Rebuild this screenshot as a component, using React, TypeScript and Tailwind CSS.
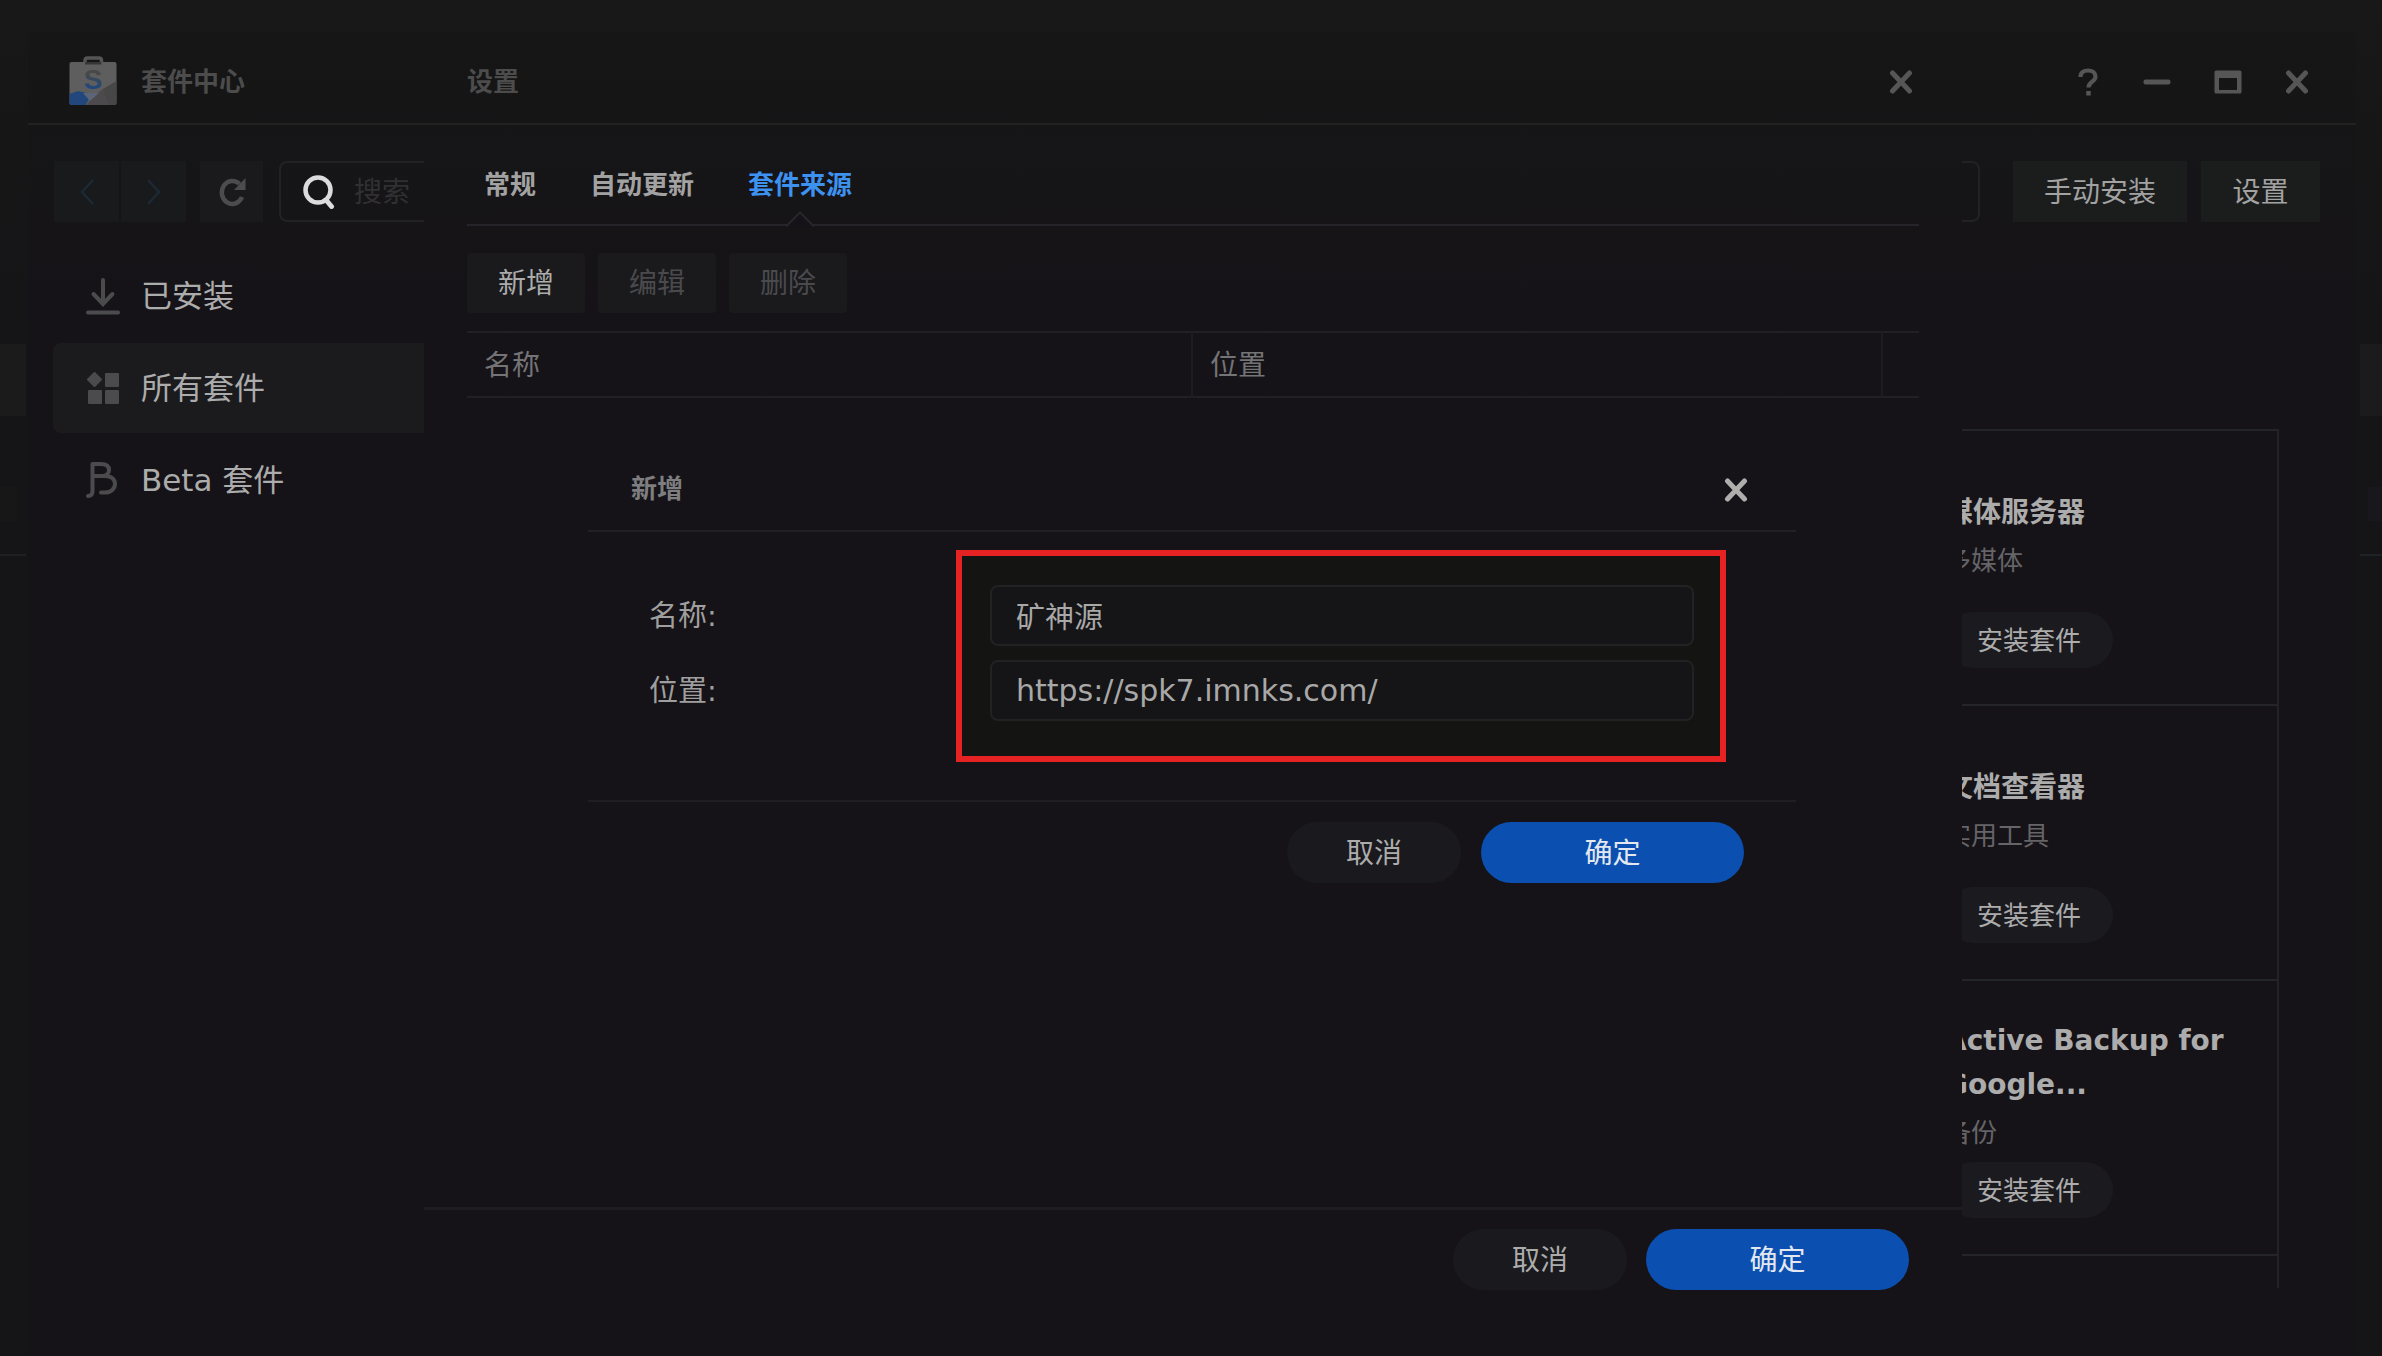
import React from "react";

function BagLogo() {
  return (
    <svg viewBox="0 0 48 52" className="h-[52px] w-12 shrink-0" aria-hidden="true">
      <defs>
        <linearGradient id="letter" x1="0" y1="0" x2="0" y2="1">
          <stop offset="0.3" stopColor="#484848" />
          <stop offset="0.8" stopColor="#1c4880" />
        </linearGradient>
      </defs>
      <path d="M16 8V4.500Q16 2 18.500 2H30Q32.500 2 32.500 4.500V8" fill="none" stroke="#555555" strokeWidth="3.500" />
      <rect x="0.500" y="6" width="47" height="43" rx="2" fill="#5e5e5e" />
      <path d="M16 6h16.500v2.500H16z" fill="#363636" />
      <path d="M27 49 34 33 47.500 25v22q0 2-2 2z" fill="#474747" />
      <path d="M22 42 34 33 40 49H18z" fill="#4c4a4c" />
      <path d="M0.500 38 9 35l13 3-5 11H2.500q-2 0-2-2z" fill="#21477c" />
      <path d="M14 37l16 0-9 8z" fill="#5c6478" />
      <text x="24" y="33" textAnchor="middle" fontFamily="Liberation Sans, sans-serif" fontWeight="700" fontSize="28" fill="url(#letter)">
        S
      </text>
    </svg>
  );
}

function CloseIcon() {
  return (
    <svg viewBox="0 0 24 24" className="size-6" fill="none" stroke="currentColor" strokeWidth="5" strokeLinecap="round" aria-hidden="true">
      <path d="M3.500 3 20.500 21M20.500 3 3.500 21" />
    </svg>
  );
}

function HelpIcon() {
  return (
    <svg viewBox="0 0 20 28" className="h-7 w-6" fill="none" stroke="currentColor" strokeWidth="4.200" aria-hidden="true">
      <path d="M2.500 9C2.500 4.500 5.500 2.500 10 2.500s7.500 2.500 7.500 6.200c0 5-7 5-7 10.800" />
      <path d="M10.500 23v4.500" strokeWidth="4.500" />
    </svg>
  );
}

function MinimizeIcon() {
  return (
    <svg viewBox="0 0 28 28" className="size-7" aria-hidden="true">
      <rect x="0.500" y="11.500" width="27" height="5" rx="2" fill="currentColor" />
    </svg>
  );
}

function MaximizeIcon() {
  return (
    <svg viewBox="0 0 28 28" className="size-7" aria-hidden="true">
      <path fillRule="evenodd" fill="currentColor" d="M2 2.500h24q1.500 0 1.500 1.500v20q0 1.500-1.500 1.500H2Q.5 25.500.5 24V4Q.5 2.500 2 2.500zM5 10v12h18V10z" />
    </svg>
  );
}

function RefreshIcon() {
  return (
    <svg viewBox="0 0 28 30" className="h-[30px] w-7" aria-hidden="true">
      <path d="M21.500 7A10.500 11.500 0 1 0 24 20" fill="none" stroke="currentColor" strokeWidth="4.500" />
      <path d="M27.500 1v12H16z" fill="currentColor" />
    </svg>
  );
}

function SearchIcon() {
  return (
    <svg viewBox="0 0 32 34" className="h-[34px] w-8 shrink-0 text-[#dcdcde]" fill="none" stroke="currentColor" aria-hidden="true">
      <circle cx="15" cy="15" r="12.500" strokeWidth="4.500" />
      <path d="m23.500 25.500 5 6" strokeWidth="5" strokeLinecap="round" />
    </svg>
  );
}

function InstalledIcon() {
  return (
    <svg viewBox="0 0 34 38" className="h-[38px] w-[34px]" fill="none" stroke="currentColor" strokeWidth="4" strokeLinecap="round" aria-hidden="true">
      <path d="M17 3v24M7.500 17 17 27l9.500-10M2 35.500h30" />
    </svg>
  );
}

function AllIcon() {
  return (
    <svg viewBox="0 0 34 34" className="size-[34px]" fill="currentColor" stroke="currentColor" strokeLinejoin="round" aria-hidden="true">
      <path d="m8.500 2 6.500 6.500-6.500 6.500L2 8.500z" strokeWidth="2" />
      <rect x="20" y="3" width="12" height="12" strokeWidth="2" />
      <rect x="3" y="20" width="12" height="12" strokeWidth="2" />
      <rect x="20" y="20" width="12" height="12" strokeWidth="2" />
    </svg>
  );
}

function BetaIcon() {
  return (
    <svg viewBox="0 0 34 36" className="h-9 w-[34px]" fill="none" stroke="currentColor" strokeWidth="4" strokeLinecap="round" strokeLinejoin="round" aria-hidden="true">
      <path d="M2 34c3 0 4.500-1.500 4.500-5V2H15c5 0 8 2 8 6s-3 6-7 6H7" />
      <path d="M16 14h3c6.500 0 10 3.500 10 8s-4 8.500-9.500 8.500H15" />
    </svg>
  );
}

const cards = [
  { title: "媒体服务器", kind: "多媒体" },
  { title: "文档查看器", kind: "实用工具" },
  { title: "Active Backup for Google...", kind: "备份" },
];

const navigation = [
  { label: "已安装", icon: <InstalledIcon />, active: false },
  { label: "所有套件", icon: <AllIcon />, active: true },
  { label: "Beta 套件", icon: <BetaIcon />, active: false },
];

function DialogButtons() {
  return (
    <>
      <button type="button" className="h-[61px] w-[174px] rounded-full bg-[#1a1a1e] pt-0.5 text-[28px]">
        取消
      </button>
      <button type="button" className="h-[61px] w-[263px] rounded-full bg-[#0b50b0] pt-0.5 text-[28px] text-[#e3e8f0]">
        确定
      </button>
    </>
  );
}

function AddSourceDialog() {
  return (
    <section role="dialog" aria-label="新增" className="absolute right-[166px] left-[164px] top-[415px] bg-[#151317]">
      <header className="flex h-[85px] items-center justify-between border-b-2 border-[#212024] pt-0.5 pr-[48px] pl-[43px]">
        <h2 className="text-[26px] font-bold text-[#7e7e80]">新增</h2>
        <button type="button" aria-label="关闭" className="text-[#aeaeac]">
          <CloseIcon />
        </button>
      </header>
      <form className="flex justify-between border-b-2 border-[#1f1e23] pt-[18px] pr-[70px] pb-[38px] pl-[61px]">
        <div className="flex flex-col gap-[14px] pt-9 text-[29px] text-[#a09f9f]">
          <label htmlFor="source-name" className="flex h-[61px] items-center">名称:</label>
          <label htmlFor="source-url" className="flex h-[61px] items-center">位置:</label>
        </div>
        <div className="flex w-[770px] flex-col gap-[14px] border-6 border-[#e62222] bg-[#141413] pt-[29px] pr-[26px] pb-[35px] pl-[28px]">
          <input id="source-name" type="text" defaultValue="矿神源" className="h-[61px] rounded-lg border-2 border-[#212224] bg-[#151416] px-6 pb-0.5 text-[29px] text-[#a8a8a8] outline-none" />
          <input id="source-url" type="text" defaultValue="https://spk7.imnks.com/" className="h-[61px] rounded-lg border-2 border-[#212224] bg-[#151416] px-6 text-[30px] text-[#a8a8a8] outline-none" />
        </div>
      </form>
      <footer className="flex justify-end gap-5 py-5 pr-[52px]">
        <DialogButtons />
      </footer>
    </section>
  );
}

function SettingsDialog() {
  return (
    <section
      role="dialog"
      aria-label="设置"
      className="absolute top-8 right-[420px] bottom-0 left-[424px] flex flex-col bg-[#151317] bg-linear-to-b from-[#161616] to-[#151317] to-20% text-[#acacac]"
    >
      <header className="flex h-[93px] shrink-0 items-start justify-between border-b-2 border-[#222122] pt-[30px] pr-[49px] pl-[43px] text-[#565656]">
        <h2 className="text-[26px] leading-10 font-bold text-[#4c4c4c]">设置</h2>
        <button type="button" aria-label="关闭" className="flex h-10 items-center">
          <CloseIcon />
        </button>
      </header>
      <div className="flex-1 px-[43px]">
        <nav className="flex h-[101px] items-center gap-[54px] border-b-2 border-[#24242a] pt-[26px] pb-1 pl-[17px] text-[26px] font-bold text-[#a3a2a2]">
          <a href="#general">常规</a>
          <a href="#update">自动更新</a>
          <a href="#source" className="relative text-[#3d92f0]">
            套件来源
            <svg viewBox="0 0 28 17" className="absolute top-full left-1/2 mt-1.5 h-[17px] w-7 -translate-x-1/2" aria-hidden="true">
              <path d="M0 15 14 1l14 14v2H0z" fill="#151317" />
              <path d="M0 15.500 14 1.500l14 14" fill="none" stroke="#26262c" strokeWidth="2" />
            </svg>
          </a>
        </nav>
        <div className="flex gap-[13px] py-[27px] pb-[18px] text-[28px]">
          <button type="button" className="h-[60px] w-[118px] rounded bg-[#1a1a1c] pt-0.5">新增</button>
          <button type="button" disabled className="h-[60px] w-[118px] rounded bg-[#1a1a1d] pt-0.5 text-[#4a4a4d]">编辑</button>
          <button type="button" disabled className="h-[60px] w-[118px] rounded bg-[#1a1a1d] pt-0.5 text-[#4a4a4d]">删除</button>
        </div>
        <table className="w-full table-fixed border-y-2 border-[#212025] text-left text-[28px] text-[#747376]">
          <thead>
            <tr className="h-[65px]">
              <th scope="col" className="border-r-2 border-[#1d1c20] pt-0.5 pl-[17px] font-normal">名称</th>
              <th scope="col" className="w-[690px] border-r-2 border-[#1d1c20] pt-0.5 pl-[17px] font-normal">位置</th>
              <td className="w-[37px]" />
            </tr>
          </thead>
        </table>
      </div>
      <footer className="flex h-[149px] shrink-0 items-start justify-end gap-[19px] border-t-3 border-[#1d1c20] pt-[19px] pr-[53px]">
        <DialogButtons />
      </footer>
      <AddSourceDialog />
    </section>
  );
}

export default function App() {
  return (
    <div className="relative flex min-h-screen flex-col overflow-hidden bg-[#171717] bg-linear-to-b from-[#181818] to-[#151416] to-25% pt-8 font-['DejaVu_Sans','Noto_Sans_CJK_SC',sans-serif] text-[#acacac]">
      <div className="absolute top-[344px] left-0 h-[72px] w-[26px] bg-[#1b1b1b]" />
      <div className="absolute top-[487px] left-0 h-[34px] w-[17px] bg-[#171717]" />
      <div className="absolute top-[554px] left-0 h-0.5 w-[26px] bg-[#202022]" />
      <div className="absolute top-[344px] right-0 h-[72px] w-[22px] bg-[#1b1b1d]" />
      <div className="absolute top-[487px] right-0 h-[34px] w-[14px] bg-[#18171b]" />
      <div className="absolute top-[554px] right-0 h-0.5 w-[22px] bg-[#1c2226]" />

      <main className="mr-[26px] ml-7 flex flex-1 flex-col bg-[#151317] bg-linear-to-b from-[#161616] to-[#151317] to-20%">
        <header className="flex h-[93px] items-start border-b-2 border-[#222222] pt-[30px] pr-[47px] pl-[41px] text-[#565656]">
          <div className="-mt-1.5">
            <BagLogo />
          </div>
          <h1 className="ml-6 text-[26px] leading-10 font-bold text-[#4c4c4c]">套件中心</h1>
          <div className="ml-auto flex h-10 items-center gap-[43px]">
            <button type="button" aria-label="帮助"><HelpIcon /></button>
            <button type="button" aria-label="最小化"><MinimizeIcon /></button>
            <button type="button" aria-label="最大化"><MaximizeIcon /></button>
            <button type="button" aria-label="关闭"><CloseIcon /></button>
          </div>
        </header>

        <div className="flex h-[97px] shrink-0 pt-9 pr-9 pl-[26px] text-[28px]">
          <div className="flex gap-0.5 text-[#1d2a34]">
            <button type="button" aria-label="后退" className="grid w-[65px] place-items-center bg-[#191a1c]">
              <svg viewBox="0 0 16 28" className="h-7 w-4" fill="none" stroke="currentColor" strokeWidth="2.500" aria-hidden="true">
                <path d="M14 2 3 14l11 12" />
              </svg>
            </button>
            <button type="button" aria-label="前进" className="grid w-[65px] place-items-center bg-[#191a1c]">
              <svg viewBox="0 0 16 28" className="h-7 w-4" fill="none" stroke="currentColor" strokeWidth="2.500" aria-hidden="true">
                <path d="m2 2 11 12L2 26" />
              </svg>
            </button>
          </div>
          <button type="button" aria-label="刷新" className="ml-3.5 grid w-[63px] place-items-center bg-[#1a1a1c] text-[#4c4c4e]">
            <RefreshIcon />
          </button>
          <label className="ml-4 flex flex-1 items-center gap-[19px] rounded-lg border-2 border-[#222224] pl-[22px]">
            <SearchIcon />
            <input type="search" aria-label="搜索" placeholder="搜索" className="min-w-0 flex-1 bg-transparent pt-0.5 outline-none placeholder:text-[#303032]" />
          </label>
          <button type="button" className="ml-[33px] w-[174px] bg-[#1b1c1c] pt-0.5 text-[#a2a2a2]">手动安装</button>
          <button type="button" className="ml-3.5 w-[119px] bg-[#1b1c1c] pt-0.5 text-[#a2a2a2]">设置</button>
        </div>

        <div className="flex flex-1 justify-between">
          <nav className="flex w-[396px] flex-col gap-0.5 pt-[29px] pl-[25px] text-[31px]">
            {navigation.map((item) => (
              <a
                key={item.label}
                href="#packages"
                className={item.active ? "flex h-[90px] items-center gap-[21px] rounded-l-lg bg-[#1b1b1e] pl-[33px]" : "flex h-[90px] items-center gap-[21px] pl-[33px]"}
              >
                <span className="text-[#4b4b4d]">{item.icon}</span>
                {item.label}
              </a>
            ))}
          </nav>
          <ul className="mt-[207px] mr-[77px] mb-[68px] w-[420px] border-r-2 border-[#232227]">
            {cards.map((card) => (
              <li key={card.title} className="flex h-[275px] flex-col items-start border-t-2 border-[#232529] pt-[26px] pb-9 pl-[86px]">
                <div className="flex flex-1 flex-col justify-center">
                  <h3 className="text-[28px] leading-11 font-bold">{card.title}</h3>
                  <p className="mt-2 text-[26px] leading-9 text-[#656468]">{card.kind}</p>
                </div>
                <button type="button" className="h-14 w-[168px] rounded-full bg-[#1a1a1f] pt-0.5 text-[26px]">安装套件</button>
              </li>
            ))}
            <li className="border-t-2 border-[#232529]" />
          </ul>
        </div>
      </main>

      <SettingsDialog />
    </div>
  );
}
